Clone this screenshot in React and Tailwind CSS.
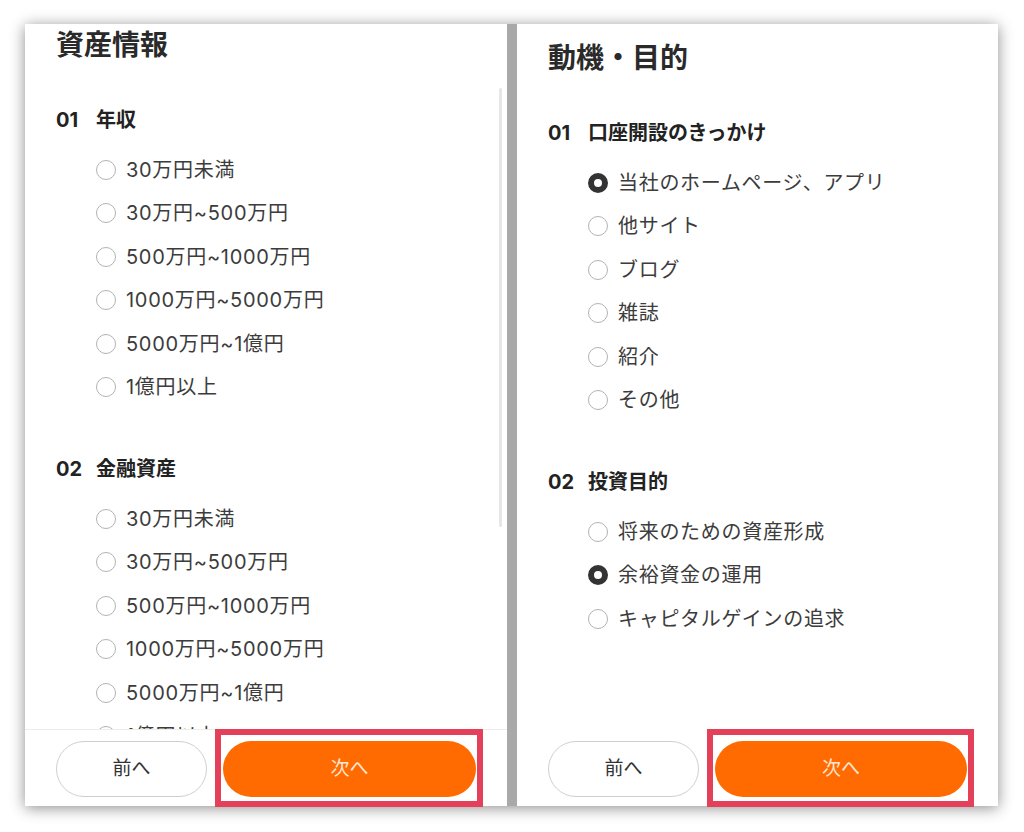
import React from "react";

const font = { fontFamily: 'Inter, "Noto Sans CJK JP", "Noto Sans", sans-serif' };

const leftSections = [
  {
    no: "01",
    label: "年収",
    options: ["30万円未満", "30万円~500万円", "500万円~1000万円", "1000万円~5000万円", "5000万円~1億円", "1億円以上"],
    checked: -1,
  },
  {
    no: "02",
    label: "金融資産",
    options: ["30万円未満", "30万円~500万円", "500万円~1000万円", "1000万円~5000万円", "5000万円~1億円", "1億円以上"],
    checked: -1,
  },
];

const rightSections = [
  {
    no: "01",
    label: "口座開設のきっかけ",
    options: ["当社のホームページ、アプリ", "他サイト", "ブログ", "雑誌", "紹介", "その他"],
    checked: 0,
  },
  {
    no: "02",
    label: "投資目的",
    options: ["将来のための資産形成", "余裕資金の運用", "キャピタルゲインの追求"],
    checked: 1,
  },
];

function Radio({ checked }) {
  if (checked) {
    return (
      <span className="w-[20px] h-[20px] rounded-full bg-[#333] flex items-center justify-center shrink-0">
        <span className="w-[8px] h-[8px] rounded-full bg-white"></span>
      </span>
    );
  }
  return <span className="w-[20px] h-[20px] rounded-full border-[1.5px] border-[#b3b3b3] bg-white shrink-0"></span>;
}

function Section({ section, first }) {
  return (
    <div className={first ? "mt-[43px]" : "mt-[46px]"}>
      <h3 className="flex items-center h-[28px] text-[20px] font-bold text-[#222]">
        <span className="w-[40px] shrink-0">{section.no}</span>
        <span>{section.label}</span>
      </h3>
      <ul className="mt-[14px] pl-[40px]">
        {section.options.map((opt, i) => (
          <li key={opt} className="flex items-center h-[43.5px] gap-[10px]">
            <Radio checked={i === section.checked} />
            <span className="text-[20px] text-[#3c3c3c] tracking-[0.7px]">{opt}</span>
          </li>
        ))}
      </ul>
    </div>
  );
}

function Panel({ title, sections, scrolled }) {
  return (
    <div className="bg-white flex flex-col h-full">
      <div className="flex-1 overflow-hidden relative">
        <div className={scrolled ? "-mt-[13px] pt-[16px] px-[31px]" : "pt-[16px] px-[31px]"}>
          <h2 className="text-[28px] leading-9 font-bold text-[#2a2a2a]">{title}</h2>
          {sections.map((s, i) => (
            <Section key={s.no} section={s} first={i === 0} />
          ))}
        </div>
        {scrolled && (
          <div className="absolute right-[5px] top-[64px] w-[3px] h-[439px] bg-[#e6e6e6] rounded-full"></div>
        )}
      </div>
      <div className={scrolled ? "border-t border-[#ececec] bg-white flex gap-4 px-[31px] pt-[11px] pb-[9px]" : "border-t border-white bg-white flex gap-4 px-[31px] pt-[11px] pb-[9px]"}>
        <button className="w-[151px] h-[56px] rounded-full border border-[#cfcfcf] bg-white text-[19px] text-[#333]">
          前へ
        </button>
        <div className="relative flex-1">
          <button className="w-full h-[56px] rounded-full bg-[#ff6b00] text-[19px] text-[#ffe6d4]">
            次へ
          </button>
          <span className="absolute -left-[8px] -right-[7px] -top-[12px] -bottom-[10px] border-[6px] border-[#e4405a] pointer-events-none"></span>
        </div>
      </div>
    </div>
  );
}

export default function App() {
  return (
    <div className="w-[1024px] h-[832px] bg-white pt-[24px] pl-[25px]" style={font}>
      <div className="w-[973px] h-[782px] bg-[#a9a9a9] flex gap-[10px] shadow-[0_2px_14px_rgba(0,0,0,0.45)]">
        <div className="w-[482px] h-full">
          <Panel title="資産情報" sections={leftSections} scrolled />
        </div>
        <div className="w-[481px] h-full">
          <Panel title="動機・目的" sections={rightSections} />
        </div>
      </div>
    </div>
  );
}
